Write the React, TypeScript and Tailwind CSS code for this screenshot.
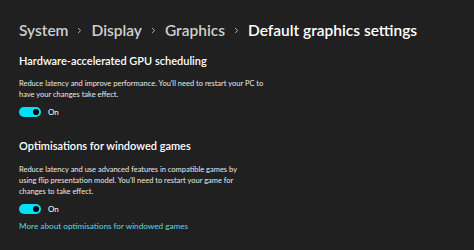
import { ChevronRight } from "lucide-react";

const crumbs = ["System", "Display", "Graphics"];

function Toggle() {
  return (
    <div className="mt-[6px] flex items-center gap-[7px]">
      <div className="flex h-[10px] w-[22px] items-center justify-end rounded-full bg-[#00e1f5] pr-[2.5px]">
        <div className="h-[6px] w-[6px] rounded-full bg-black" />
      </div>
      <span className="text-[8px] leading-[12px] text-white">On</span>
    </div>
  );
}

export default function App() {
  return (
    <div className="h-[250px] w-[474px] overflow-hidden bg-[#202020] pl-[19px] font-['Lato',sans-serif] text-white">
      <div className="flex items-center pt-[18px] text-[15.5px] font-semibold leading-[24px]">
        {crumbs.map((c) => (
          <div key={c} className="flex items-center">
            <span className="text-[#cfcfcf]">{c}</span>
            <ChevronRight className="mx-[7px] h-[9px] w-[9px] text-[#bdbdbd]" strokeWidth={2.5} />
          </div>
        ))}
        <span className="text-white">Default graphics settings</span>
      </div>

      <h2 className="mt-[11px] text-[11px] font-semibold leading-[16px]">Hardware-accelerated GPU scheduling</h2>
      <p className="mt-[9px] w-[250px] text-[7.5px] leading-[11px] text-[#e8e8e8]">
        Reduce latency and improve performance. You'll need to restart your PC to have your changes take effect.
      </p>
      <Toggle />

      <h2 className="mt-[20px] text-[11px] font-semibold leading-[16px]">Optimisations for windowed games</h2>
      <p className="mt-[10px] w-[236px] text-[7.5px] leading-[11px] text-[#e8e8e8]">
        Reduce latency and use advanced features in compatible games by using flip presentation model. You'll need to
        restart your game for changes to take effect.
      </p>
      <Toggle />
      <a className="mt-[5px] block text-[8.2px] leading-[12px] text-[#5fd6e4]">More about optimisations for windowed games</a>
    </div>
  );
}
